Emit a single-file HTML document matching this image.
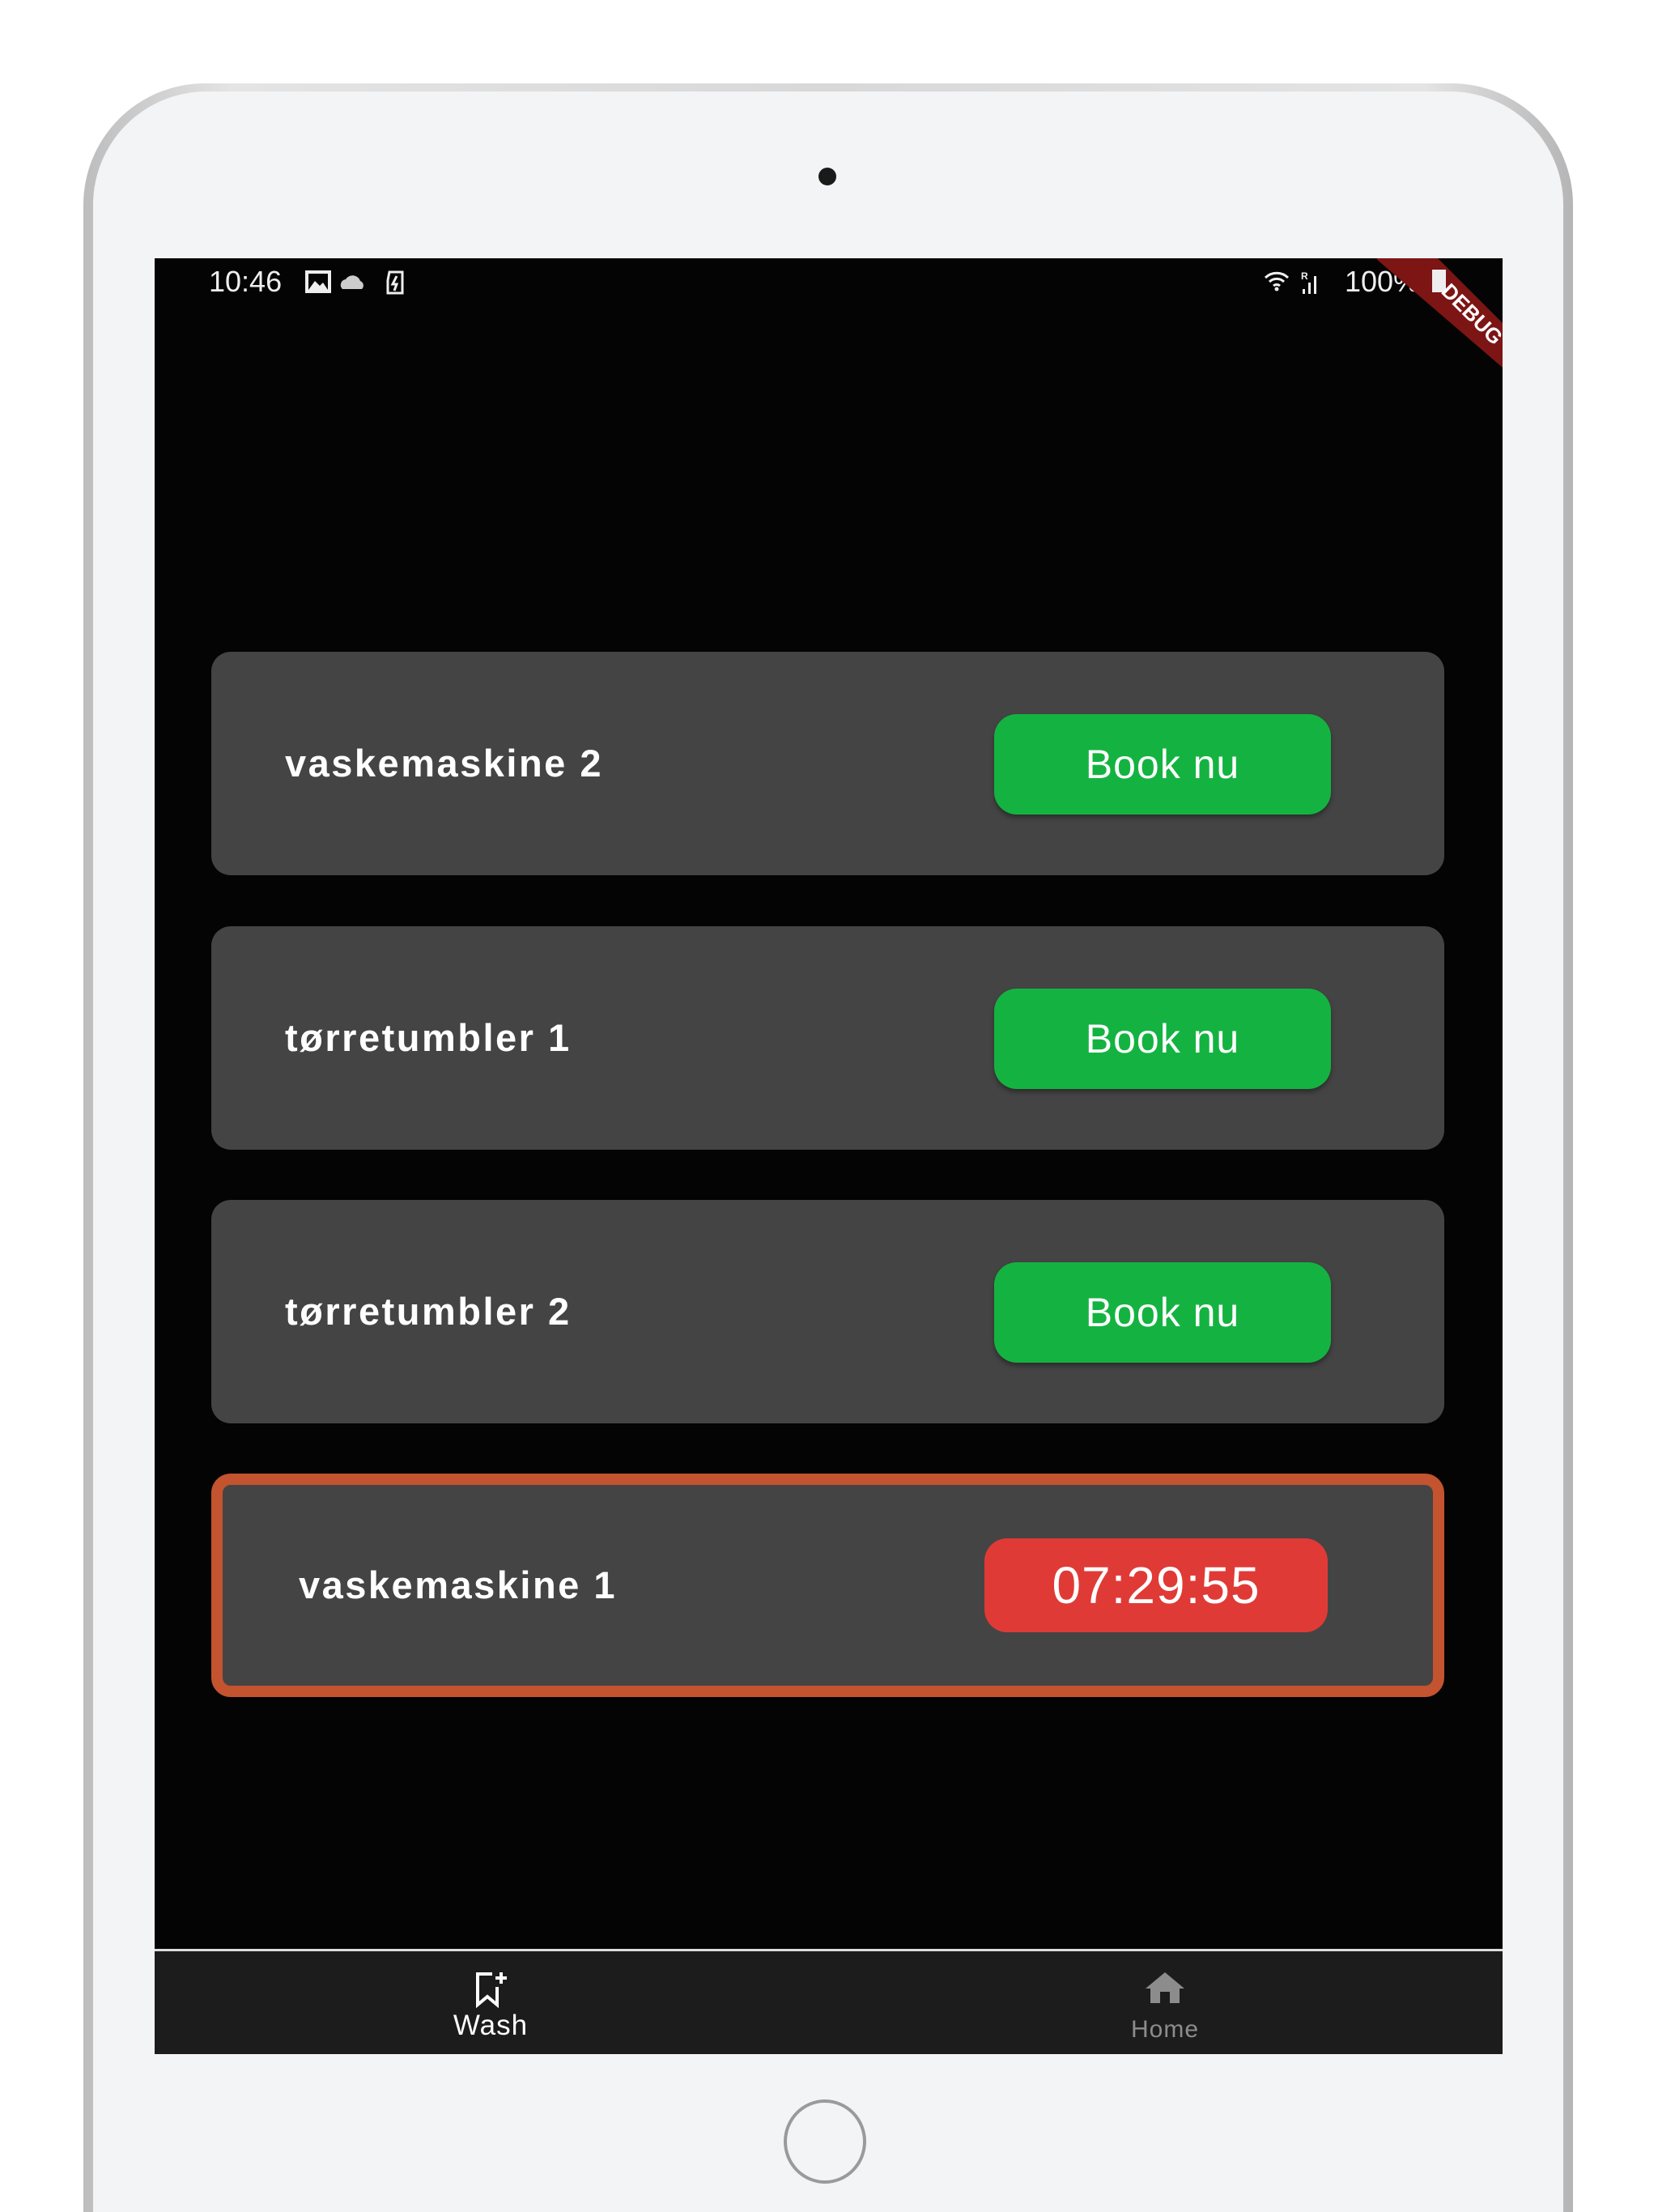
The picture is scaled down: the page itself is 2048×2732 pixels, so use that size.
<!DOCTYPE html>
<html><head><meta charset="utf-8"><style>
html,body{margin:0;padding:0;background:#fff;width:2048px;height:2732px;overflow:hidden;position:relative;font-family:"Liberation Sans",sans-serif}
.frame{position:absolute;left:103px;top:103px;width:1840px;height:2629px;border-radius:150px 150px 0 0;background:linear-gradient(90deg,#bdbdbd,#e4e4e4 10%,#d8d8d8 50%,#e4e4e4 90%,#b5b5b5);}
.inner{position:absolute;left:12px;top:10px;right:12px;bottom:0;border-radius:140px 140px 0 0;background:#f3f4f6}
.screen{position:absolute;left:191px;top:319px;width:1665px;height:2218px;background:#040404;overflow:hidden}
.sb{position:absolute;top:0;left:0;width:100%;height:60px;color:#eee;font-size:36px}
.card{position:absolute;left:70px;width:1523px;height:276px;background:#444;border-radius:24px;box-sizing:border-box}
.lbl{position:absolute;left:91px;top:0;line-height:276px;color:#fff;font-weight:bold;font-size:47px;letter-spacing:2.5px}
.btn{position:absolute;left:967px;top:77px;width:416px;height:124px;background:#14b341;border-radius:28px;color:#fff;font-size:50px;letter-spacing:1px;text-align:center;line-height:124px;box-shadow:0 4px 6px rgba(0,0,0,.35)}
.nav{position:absolute;left:0;top:2088px;width:100%;height:130px;background:#1c1c1c;border-top:3px solid #ddd}
</style></head><body>
<div class="frame"><div class="inner"></div></div>
<div style="position:absolute;left:1011px;top:207px;width:22px;height:22px;border-radius:50%;background:#1a1a1a"></div>
<div style="position:absolute;left:968px;top:2593px;width:102px;height:104px;border-radius:50%;border:4px solid #9a9a9a;box-sizing:border-box"></div>
<div class="screen">
  <div class="sb">
    <span style="position:absolute;left:67px;top:8px">10:46</span>
    <svg style="position:absolute;left:186px;top:14px" width="130" height="32" viewBox="0 0 130 32">
      <rect x="2" y="3" width="28" height="24" fill="none" stroke="#eee" stroke-width="4"/><path d="M4 25 L12 14 L18 20 L22 16 L28 25Z" fill="#eee"/>
      <path d="M46 24 a7 7 0 0 1 4 -12 a10 10 0 0 1 18 2 a6 6 0 0 1 2 10Z" fill="#ccc"/>
      <path d="M104 3 h16 v26 h-18 v-16Z" fill="none" stroke="#eee" stroke-width="3"/><path d="M113 8 l-5 10 h5 l-3 8" stroke="#eee" stroke-width="3" fill="none"/>
    </svg>
    <svg style="position:absolute;left:1370px;top:14px" width="80" height="32" viewBox="0 0 80 32">
      <path d="M2 10 a20 20 0 0 1 28 0 M7 15 a13 13 0 0 1 18 0 M12 20 a6 6 0 0 1 8 0" stroke="#eee" stroke-width="3" fill="none"/><circle cx="16" cy="24" r="2.5" fill="#eee"/>
      <rect x="48" y="24" width="3" height="6" fill="#eee"/><rect x="55" y="16" width="3" height="14" fill="#eee"/><rect x="62" y="8" width="3" height="22" fill="#eee"/>
      <text x="46" y="12" font-size="12" fill="#eee" font-weight="bold">R</text>
    </svg>
    <span style="position:absolute;left:1470px;top:8px">100%</span>
    <svg style="position:absolute;left:1510px;top:0" width="155" height="160" viewBox="1510 0 155 160">
      <polygon points="1508,0 1585,0 1665,80 1665,135" fill="#7d1515"/>
      <rect x="1578" y="14" width="17" height="28" fill="#eee"/>
      <text x="0" y="0" transform="translate(1588,42) rotate(45)" font-size="26" font-weight="bold" fill="#fff" font-family="Liberation Sans">DEBUG</text>
    </svg>
  </div>
  <div class="card" style="top:486px"><div class="lbl">vaskemaskine 2</div><div class="btn">Book nu</div></div>
  <div class="card" style="top:825px"><div class="lbl">tørretumbler 1</div><div class="btn">Book nu</div></div>
  <div class="card" style="top:1163px"><div class="lbl">tørretumbler 2</div><div class="btn">Book nu</div></div>
  <div class="card" style="top:1501px;border:14px solid #c4532f"><div class="lbl" style="left:94px;line-height:248px">vaskemaskine 1</div>
    <div class="btn" style="left:941px;top:66px;width:424px;height:116px;line-height:116px;background:#e03a36;font-size:64px;box-shadow:none">07:29:55</div></div>
  <div class="nav">
    <svg style="position:absolute;left:395px;top:24px" width="44" height="46" viewBox="0 0 44 46">
      <path d="M22 4 H4 V42 L16 32 L28 42 V20" stroke="#fff" stroke-width="4" fill="none"/><path d="M33 2 V16 M26 9 H40" stroke="#fff" stroke-width="4"/>
    </svg>
    <div style="position:absolute;left:315px;top:72px;width:200px;text-align:center;color:#fff;font-size:35px;letter-spacing:1px">Wash</div>
    <svg style="position:absolute;left:1222px;top:24px" width="52" height="42" viewBox="0 0 52 42">
      <path d="M26 2 L50 22 H44 V40 H32 V26 H20 V40 H8 V22 H2Z" fill="#8c8c8c"/>
    </svg>
    <div style="position:absolute;left:1148px;top:80px;width:200px;text-align:center;color:#8c8c8c;font-size:30px;letter-spacing:1px">Home</div>
  </div>
</div>
</body></html>
